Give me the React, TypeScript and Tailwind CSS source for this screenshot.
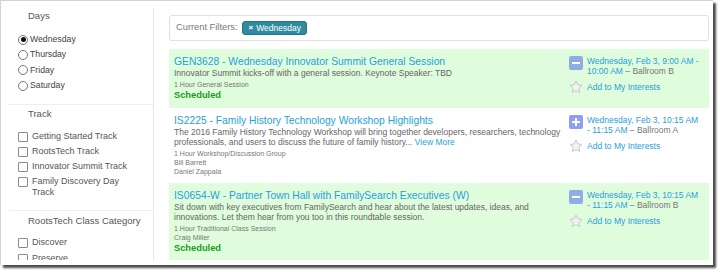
import React from "react";

const font = { fontFamily: '"Liberation Sans", Arial, sans-serif' };

type Session = {
  title: string;
  desc: React.ReactNode;
  meta: string[];
  scheduled: boolean;
  when1: string;
  when2: string;
  room: string;
};

const sessions: Session[] = [
  {
    title: "GEN3628 - Wednesday Innovator Summit General Session",
    desc: "Innovator Summit kicks-off with a general session. Keynote Speaker: TBD",
    meta: ["1 Hour General Session"],
    scheduled: true,
    when1: "Wednesday, Feb 3, 9:00 AM -",
    when2: "10:00 AM",
    room: "Ballroom B",
  },
  {
    title: "IS2225 - Family History Technology Workshop Highlights",
    desc: (
      <>
        The 2016 Family History Technology Workshop will bring together developers, researchers, technology
        <br />
        professionals, and users to discuss the future of family history...{" "}
        <span className="text-[#2a9fd8]">View More</span>
      </>
    ),
    meta: ["1 Hour Workshop/Discussion Group", "Bill Barrett", "Daniel Zappala"],
    scheduled: false,
    when1: "Wednesday, Feb 3, 10:15 AM",
    when2: "- 11:15 AM",
    room: "Ballroom A",
  },
  {
    title: "IS0654-W - Partner Town Hall with FamilySearch Executives (W)",
    desc: (
      <>
        Sit down with key executives from FamilySearch and hear about the latest updates, ideas, and
        <br />
        innovations. Let them hear from you too in this roundtable session.
      </>
    ),
    meta: ["1 Hour Traditional Class Session", "Craig Miller"],
    scheduled: true,
    when1: "Wednesday, Feb 3, 10:15 AM",
    when2: "- 11:15 AM",
    room: "Ballroom B",
  },
];

function Radio({ on }: { on?: boolean }) {
  return (
    <span className="w-[10px] h-[10px] rounded-full border border-[#777] bg-white flex items-center justify-center shrink-0">
      {on && <span className="w-[5px] h-[5px] rounded-full bg-[#111]" />}
    </span>
  );
}

function Box() {
  return <span className="w-[10px] h-[10px] mt-[0.5px] border border-[#8a8a8a] rounded-[1px] bg-white shrink-0" />;
}

function Star() {
  return (
    <svg width="14" height="14" viewBox="0 0 24 24" className="shrink-0">
      <path
        d="M12 1.8l3.1 6.6 7.1.9-5.2 5 1.3 7.1L12 18l-6.3 3.4 1.3-7.1-5.2-5 7.1-.9z"
        fill="#f3f3f3"
        stroke="#c4c4c4"
        strokeWidth="1.6"
        strokeLinejoin="round"
      />
    </svg>
  );
}

function Toggle({ plus }: { plus?: boolean }) {
  return (
    <span
      className={
        "w-[14px] h-[14px] rounded-[2px] flex items-center justify-center shrink-0 relative " +
        (plus ? "bg-[#8d9ff0]" : "bg-[#8eade3]")
      }
    >
      <span className="w-[8px] h-[2px] bg-white" />
      {plus && <span className="absolute w-[2px] h-[8px] bg-white" />}
    </span>
  );
}

function Section({ title, children }: { title: string; children: React.ReactNode }) {
  return (
    <div>
      <div className="pl-[19px] text-[9.5px] leading-[12px] text-[#555]">{title}</div>
      {children}
    </div>
  );
}

export default function App() {
  return (
    <div className="w-[720px] h-[272px] bg-white overflow-hidden" style={font}>
      <div className="w-[713px] h-[265px] border-t border-l border-[#d2d2d2] shadow-[3px_3px_2px_rgba(0,0,0,0.7)] flex pt-[7px] overflow-hidden">
        {/* sidebar */}
        <aside className="w-[145px] ml-[8px] h-[252px] border-r border-[#e6e6e6] overflow-hidden shrink-0">
          <div className="pt-[2px]">
            <Section title="Days">
              <div className="mt-[10px] pl-[9px] text-[8.7px] text-[#444]">
                {["Wednesday", "Thursday", "Friday", "Saturday"].map((d, i) => (
                  <div key={d} className="h-[15.3px] flex items-center gap-[2px]">
                    <Radio on={i === 0} />
                    <span>{d}</span>
                  </div>
                ))}
              </div>
            </Section>
          </div>
          <div className="border-t border-[#eee] mt-[11px] pt-[3px]">
            <Section title="Track">
              <div className="mt-[9px] pl-[9px] text-[9px] text-[#555]">
                {["Getting Started Track", "RootsTech Track", "Innovator Summit Track", "Family Discovery Day Track"].map(
                  (t) => (
                    <div key={t} className="py-[2px] flex items-start gap-[4px]">
                      <Box />
                      <span className="w-[104px] leading-[11px]">{t}</span>
                    </div>
                  )
                )}
              </div>
            </Section>
          </div>
          <div className="border-t border-[#eee] mt-[10px] pt-[4px]">
            <Section title="RootsTech Class Category">
              <div className="mt-[8px] pl-[9px] text-[9px] text-[#555]">
                {["Discover", "Preserve"].map((t) => (
                  <div key={t} className="h-[16px] flex items-center gap-[4px]">
                    <Box />
                    <span>{t}</span>
                  </div>
                ))}
              </div>
            </Section>
          </div>
        </aside>

        {/* main */}
        <main className="flex-1 pl-[15px] pr-[4px] pt-[7px] h-[252px] overflow-hidden">
          <div className="h-[26px] border border-[#e0e0e0] rounded-[3px] flex items-center pl-[6px] gap-[5px]">
            <span className="text-[9.3px] text-[#777]">Current Filters:</span>
            <span className="h-[14px] px-[5px] rounded-[3px] bg-[#2f8b9f] border border-[#277587] text-white text-[8.5px] flex items-center gap-[3px]">
              <span className="font-bold text-[8px]">×</span>
              Wednesday
            </span>
          </div>

          <div className="mt-[8px]">
            {sessions.map((s, i) => (
              <div
                key={s.title}
                className={"flex px-[5px] pt-[7px] pb-[7px] " + (i % 2 === 0 ? "bg-[#dffcdc]" : "bg-white")}
              >
                <div className="flex-1 min-w-0">
                  <div className="text-[10.3px] leading-[12px] text-[#27a1da] whitespace-nowrap">{s.title}</div>
                  <div className="text-[8.5px] leading-[10px] text-[#666] whitespace-nowrap">{s.desc}</div>
                  <div className="mt-[2px] text-[7px] leading-[9px] text-[#777]">
                    {s.meta.map((m) => (
                      <div key={m}>{m}</div>
                    ))}
                  </div>
                  {s.scheduled && (
                    <div className="text-[9.3px] leading-[12px] font-bold text-[#1d9a1d]">Scheduled</div>
                  )}
                </div>
                <div className="w-[135px] shrink-0">
                  <div className="flex gap-[4px]">
                    <Toggle plus={!s.scheduled} />
                    <div className="text-[8.5px] leading-[10px] text-[#27a1da] whitespace-nowrap">
                      <div>{s.when1}</div>
                      <div>
                        {s.when2} <span className="text-[#777]">– {s.room}</span>
                      </div>
                    </div>
                  </div>
                  <div className="mt-[4px] h-[14px] flex items-center gap-[4px]">
                    <Star />
                    <span className="text-[8.5px] text-[#27a1da]">Add to My Interests</span>
                  </div>
                </div>
              </div>
            ))}
          </div>
        </main>
      </div>
    </div>
  );
}
